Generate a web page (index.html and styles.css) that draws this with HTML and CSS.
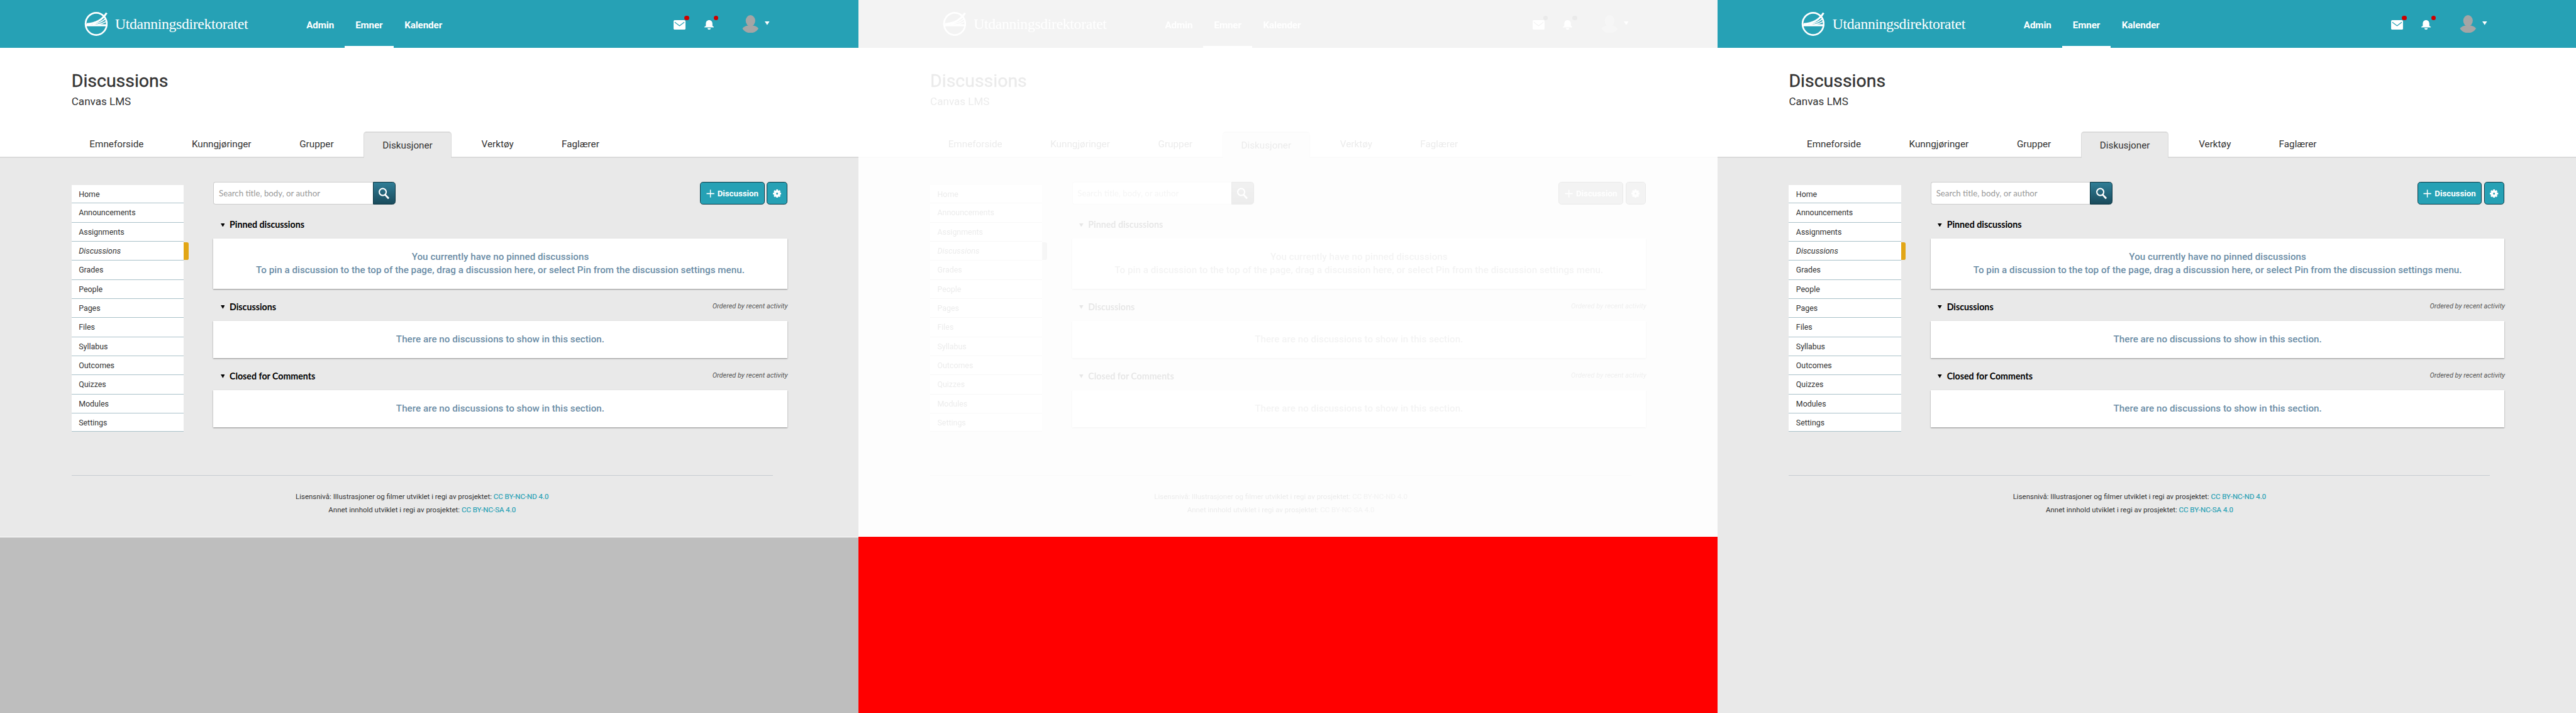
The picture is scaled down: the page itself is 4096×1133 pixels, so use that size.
FILE: index.html
```html
<!DOCTYPE html>
<html lang="no">
<head>
<meta charset="utf-8">
<title>Discussions</title>
<link rel="stylesheet" href="styles.css">
</head>
<body>
<main class="sheet">
  <section class="panel panel-before"></section>
  <section class="panel panel-diff"></section>
  <section class="panel panel-after"></section>
</main>

<template id="page">
  <div class="page">
    <header class="topbar">
      <div class="brand">
        <svg class="brand-mark" viewBox="0 0 39 41" fill="none" stroke="#fff">
          <ellipse cx="20" cy="20" rx="17.800" ry="18.600" stroke-width="2.800"/>
          <path d="M2 22.300H38" stroke-width="3.400"/>
          <path d="M4 20.300C18 19.500 30 14 37.500 1.500" stroke-width="3.200"/>
          <path d="M14 20.800C22 19.500 30 17 35.500 11.500" stroke-width="1.800"/>
          <path d="M22 21.300C28 20 33 18.500 37.500 15.500" stroke-width="1.600"/>
        </svg>
        <span class="brand-name">Utdanningsdirektoratet</span>
      </div>
      <nav class="mainnav">
        <a>Admin</a><a class="current">Emner</a><a class="last">Kalender</a>
      </nav>
      <div class="tools">
        <span class="tool tool-mail">
          <svg width="20" height="16" viewBox="0 0 20 16"><rect width="20" height="16" rx="2" fill="#fff"/><path d="M2 3.500l8 6 8-6" fill="none" stroke="#26a1b5" stroke-width="1.300"/></svg>
          <i class="dot"></i>
        </span>
        <span class="tool tool-bell">
          <svg width="16" height="16" viewBox="0 0 16 16" fill="#fff"><path d="M0 12.200V11.400L2.500 9.500V6C2.500 2.500 4.500 0 8 0s5.500 2.500 5.500 6v3.500L16 11.400v.8zM5.200 13.500h5.600C10.500 15 9.500 16 8 16s-2.500-1-2.800-2.500z"/></svg>
          <i class="dot"></i>
        </span>
        <svg class="avatar" width="28" height="30" viewBox="0 0 28 30" fill="#a5a5a5"><ellipse cx="14" cy="9.500" rx="8" ry="9.500"/><path d="M.5 22.500C3 19 7 18 10 17.500h8c3 .5 7 1.500 9.500 5C25 27 20 30 14 30S3 27 .5 22.500z"/></svg>
        <svg class="caret" width="8" height="6" viewBox="0 0 8 6" fill="#fff"><path d="M0 0h8L4 6z"/></svg>
      </div>
    </header>

    <div class="heading">
      <h1>Discussions</h1>
      <p>Canvas LMS</p>
    </div>

    <nav class="tabs">
      <a class="t1">Emneforside</a><a class="t2">Kunngjøringer</a><a class="t3">Grupper</a><a class="t4 open">Diskusjoner</a><a class="t5">Verktøy</a><a class="t6">Faglærer</a>
    </nav>

    <div class="body">
      <ul class="side">
        <li>Home</li><li>Announcements</li><li>Assignments</li><li class="active">Discussions</li><li>Grades</li><li>People</li><li>Pages</li><li>Files</li><li>Syllabus</li><li>Outcomes</li><li>Quizzes</li><li>Modules</li><li>Settings</li>
      </ul>
      <div class="content">
        <div class="toolbar">
          <div class="search"><span class="search-field">Search title, body, or author</span><span class="search-go"><svg width="20" height="20" viewBox="0 0 20 20" fill="none" stroke="#fff"><circle cx="8" cy="7.500" r="5.800" stroke-width="2.200"/><path d="M12 12l6 6.500" stroke-width="3"/></svg></span></div>
          <div class="actions">
            <span class="btn btn-new"><svg width="14" height="14" viewBox="0 0 14 14" stroke="#fff" stroke-width="1.600"><path d="M7 .5v13M.5 7h13"/></svg><b>Discussion</b></span>
            <span class="btn btn-gear"><svg width="14" height="14" viewBox="0 0 14 14"><circle cx="7" cy="7" r="3.600" fill="none" stroke="#fff" stroke-width="4"/><path d="M7 0v3M7 11v3M0 7h3M11 7h3M2.050 2.050l2 2M9.950 9.950l2 2M2.050 11.950l2-2M9.950 4.050l2-2" stroke="#fff" stroke-width="3"/></svg></span>
          </div>
        </div>
        <div class="group"><h2><svg width="7" height="6" viewBox="0 0 7 6"><path d="M0 0h7L3.500 6z"/></svg><span>Pinned discussions</span></h2></div>
        <div class="card tall"><p>You currently have no pinned discussions</p><p>To pin a discussion to the top of the page, drag a discussion here, or select Pin from the discussion settings menu.</p></div>
        <div class="group"><h2><svg width="7" height="6" viewBox="0 0 7 6"><path d="M0 0h7L3.500 6z"/></svg><span>Discussions</span></h2><em>Ordered by recent activity</em></div>
        <div class="card"><p>There are no discussions to show in this section.</p></div>
        <div class="group"><h2><svg width="7" height="6" viewBox="0 0 7 6"><path d="M0 0h7L3.500 6z"/></svg><span>Closed for Comments</span></h2><em>Ordered by recent activity</em></div>
        <div class="card"><p>There are no discussions to show in this section.</p></div>
      </div>
    </div>

    <footer class="foot">
      <p>Lisensnivå: Illustrasjoner og filmer utviklet i regi av prosjektet: <a>CC BY-NC-ND 4.0</a></p>
      <p>Annet innhold utviklet i regi av prosjektet: <a>CC BY-NC-SA 4.0</a></p>
    </footer>
  </div>
</template>
<script src="panels.js"></script>
</body>
</html>
```
FILE: panels.js
```js
// The same page is shown in all three panels of the comparison.
const page = document.getElementById('page');
document.querySelectorAll('.panel').forEach((panel) => {
  panel.appendChild(page.content.cloneNode(true));
});
```
FILE: styles.css
```css
* { box-sizing: border-box; margin: 0; padding: 0; }
html, body { overflow: hidden; background: #fff; }
svg { display: block; flex: none; }

.sheet {
  zoom: 0.948148;
  display: grid;
  grid-template-columns: repeat(3, 1440px);
  width: 4320px;
  height: 1195px;
  font-family: Roboto, "Liberation Sans", sans-serif;
  color: #333;
}
.panel { height: 1195px; overflow: hidden; }
.panel-before { background: linear-gradient(#fff 901px, #bebebe 901px); }
.panel-diff { background: linear-gradient(#fff 900px, #f00 900px); }
.panel-after { background: #e9e9e9; }
.page { height: 900px; background: #e9e9e9; }
.panel-diff .page { filter: grayscale(1) opacity(0.1); }

/* top bar */
.topbar { display: flex; height: 80px; background: #26a1b5; color: #fff; padding-left: 141px; }
.brand { display: flex; width: 355px; padding-top: 20px; }
.brand-mark { width: 39px; height: 41px; }
.brand-name { font: 25px/30px "Liberation Serif", serif; letter-spacing: -0.34px; padding: 5px 0 0 13px; white-space: nowrap; }
.mainnav { display: flex; width: 634px; font-size: 16px; font-weight: 700; line-height: 85px; text-align: center; }
.mainnav a { width: 82px; height: 80px; letter-spacing: -0.1px; }
.mainnav .current { border-bottom: 4px solid #fff; margin-right: 1px; }
.mainnav .last { width: 98px; }
.tools { display: flex; align-items: flex-start; }
.tool { position: relative; margin-top: 34px; }
.tool-bell { margin-left: 31px; }
.dot { position: absolute; top: -8px; right: -6px; width: 8px; height: 8px; border-radius: 50%; background: #c00; }
.tool-bell .dot { right: -8px; }
.avatar { margin: 25px 0 0 48px; }
.caret { margin: 36px 0 0 10px; }

/* heading and tabs */
.heading { height: 140px; padding: 41px 0 0 120px; background: #fff; }
.heading h1 { font-size: 30px; font-weight: 400; line-height: 30px; -webkit-text-stroke: 0.4px currentColor; }
.heading p { font-size: 18px; line-height: 24px; margin-top: 7px; }
.tabs { display: flex; gap: 20px; height: 45px; padding-left: 120px; font-size: 16.1px; line-height: 43px; text-align: center;
  background: linear-gradient(#fff 42px, #dadada 42px); }
.tabs .t1 { width: 151px; }
.tabs .t2 { width: 161px; }
.tabs .t3 { width: 118px; }
.tabs .t4 { width: 147px; }
.tabs .t5 { width: 115px; }
.tabs .t6 { width: 123px; }
.tabs .open { background: #e9e9e9; border: 1px solid #dadada; border-top-width: 3px; border-bottom: 0; border-radius: 5px 5px 0 0; }

/* columns */
.body { display: flex; gap: 50px; height: 531px; padding: 40px 0 0 120px; }
.side { width: 188px; margin-top: 5px; list-style: none; font-size: 13.1px; }
.side li { position: relative; height: 32px; padding-left: 12px; line-height: 32px; background: #fff; border-bottom: 1px solid #a9c1c9; }
.side li:first-child, .side li:last-child { height: 31px; line-height: 31px; }
.side .active { font-style: italic; font-size: 13.5px; }
.side .active::after { content: ""; position: absolute; left: 188px; top: 1px; width: 8px; height: 30px; background: #e2a616; border-radius: 0 3px 3px 0; }

.content { width: 962px; }
.toolbar { display: flex; justify-content: space-between; height: 38px; }
.search { display: flex; font: 14px/36px Lato, sans-serif; color: #999; }
.search-field { width: 267px; padding-left: 8px; background: #fff; border: 1px solid #ccc; border-right: 0; border-radius: 4px 0 0 4px; }
.search-go { display: grid; place-items: center; width: 38px; border: 1px solid #0a3441; border-radius: 0 5px 5px 0; background: linear-gradient(#2f7d96, #1a4b5c); }
.actions { display: flex; gap: 4px; }
.btn { display: flex; align-items: center; justify-content: center; height: 38px; border: 1px solid #0b3a46; border-radius: 5px; background: #26a1b5; color: #fff; }
.btn-new { width: 108px; gap: 5px; font-size: 14px; }
.btn-new b { font-weight: 700; }
.btn-gear { width: 34px; }

.group { display: flex; justify-content: space-between; height: 54px; padding-top: 21px; }
.toolbar + .group { height: 57px; padding-top: 24px; }
.group h2 { display: flex; align-items: center; gap: 8px; height: 20px; padding-left: 12px; font: bold 15px/20px Lato, sans-serif; color: #000; }
.group em { font-size: 11.55px; line-height: 20px; color: #555; margin: -1px -1px 0 0; }
.card { height: 62px; padding-top: 20px; text-align: center; font-size: 16px; font-weight: 500; letter-spacing: 0.035px; line-height: 22px; color: #6b8da6; background: #fff; box-shadow: 0 1px 2px rgba(0, 0, 0, 0.4); }
.card.tall { height: 84px; }

.foot { width: 1176px; margin-left: 120px; border-top: 1px solid #c7cdd1; padding-top: 25px; text-align: center; font-size: 12.1px; line-height: 22px; }
.foot a { color: #26a1b5; -webkit-text-stroke: 0.2px currentColor; }
```
